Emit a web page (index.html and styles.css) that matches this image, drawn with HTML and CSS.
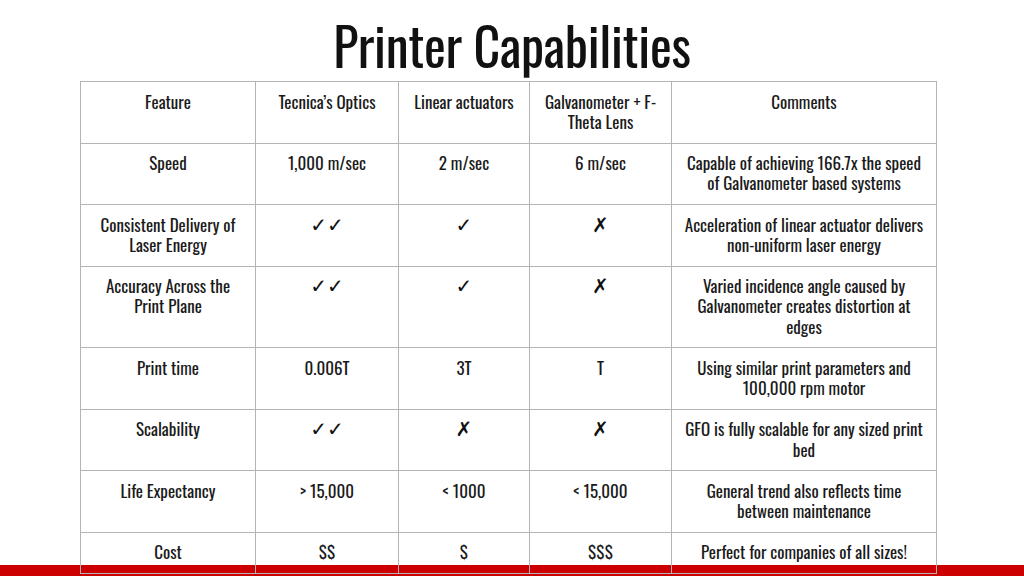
FILE: index.html
```html
<!DOCTYPE html>
<html lang="en">
<head>
<meta charset="utf-8">
<title>Printer Capabilities</title>
<link rel="stylesheet" href="styles.css">
</head>
<body>
<div class="slide">
  <header class="title-wrap">
    <h1 class="title">Printer Capabilities</h1>
  </header>
  <table class="grid">
    <colgroup>
      <col class="c1"><col class="c2"><col class="c3"><col class="c4"><col class="c5">
    </colgroup>
    <tbody>
      <tr><td>Feature</td><td>Tecnica’s Optics</td><td>Linear actuators</td><td>Galvanometer + F-Theta Lens</td><td>Comments</td></tr>
      <tr><td>Speed</td><td>1,000 m/sec</td><td>2 m/sec</td><td>6 m/sec</td><td>Capable of achieving 166.7x the speed of Galvanometer based systems</td></tr>
      <tr><td>Consistent Delivery of Laser Energy</td><td class="sym">✓✓</td><td class="sym">✓</td><td class="sym">✗</td><td>Acceleration of linear actuator delivers non-uniform laser energy</td></tr>
      <tr><td>Accuracy Across the Print Plane</td><td class="sym">✓✓</td><td class="sym">✓</td><td class="sym">✗</td><td>Varied incidence angle caused by Galvanometer creates distortion at edges</td></tr>
      <tr><td>Print time</td><td>0.006T</td><td>3T</td><td>T</td><td>Using similar print parameters and 100,000 rpm motor</td></tr>
      <tr><td>Scalability</td><td class="sym">✓✓</td><td class="sym">✗</td><td class="sym">✗</td><td>GFO is fully scalable for any sized print bed</td></tr>
      <tr><td>Life Expectancy</td><td>&gt; 15,000</td><td>&lt; 1000</td><td>&lt; 15,000</td><td>General trend also reflects time between maintenance</td></tr>
      <tr><td>Cost</td><td>$$</td><td>$</td><td>$$$</td><td>Perfect for companies of all sizes!</td></tr>
    </tbody>
  </table>
  <div class="redbar"></div>
</div>
</body>
</html>
```
FILE: styles.css
```css
html, body {
  margin: 0;
  padding: 0;
  background: #ffffff;
}
.slide {
  position: relative;
  width: 1024px;
  height: 576px;
  overflow: hidden;
  background: #ffffff;
  font-family: "Oswald", "Liberation Sans Narrow", "DejaVu Sans Condensed", "Liberation Sans", sans-serif;
  color: #111111;
}
.title-wrap {
  height: 81px;
  display: flex;
  align-items: center;
  justify-content: center;
}
.title {
  margin: 0;
  font-weight: normal;
  font-size: 52px;
  line-height: 1;
  padding-top: 8px;
  letter-spacing: -0.3px;
  color: #111111;
}
.grid {
  position: relative;
  z-index: 1;
  margin-left: 80px;
  width: 856px;
  border-collapse: collapse;
  table-layout: fixed;
  background: transparent;
}
.c1 { width: 175px; }
.c2 { width: 143px; }
.c3 { width: 131px; }
.c4 { width: 142px; }
.c5 { width: 265px; }
.grid td {
  border: 1px solid #b4b4b4;
  padding: 9.5px 10px 10.5px;
  vertical-align: top;
  text-align: center;
  font-size: 17px;
  font-weight: normal;
  line-height: 20.25px;
  color: #1a1a1a;
}
.grid td.sym {
  font-family: "DejaVu Sans", sans-serif;
  font-size: 20px;
  font-weight: bold;
  color: #111111;
}
.redbar {
  position: absolute;
  left: 0;
  right: 0;
  bottom: 0;
  height: 11px;
  background: #cc0000;
  z-index: 0;
}
```
